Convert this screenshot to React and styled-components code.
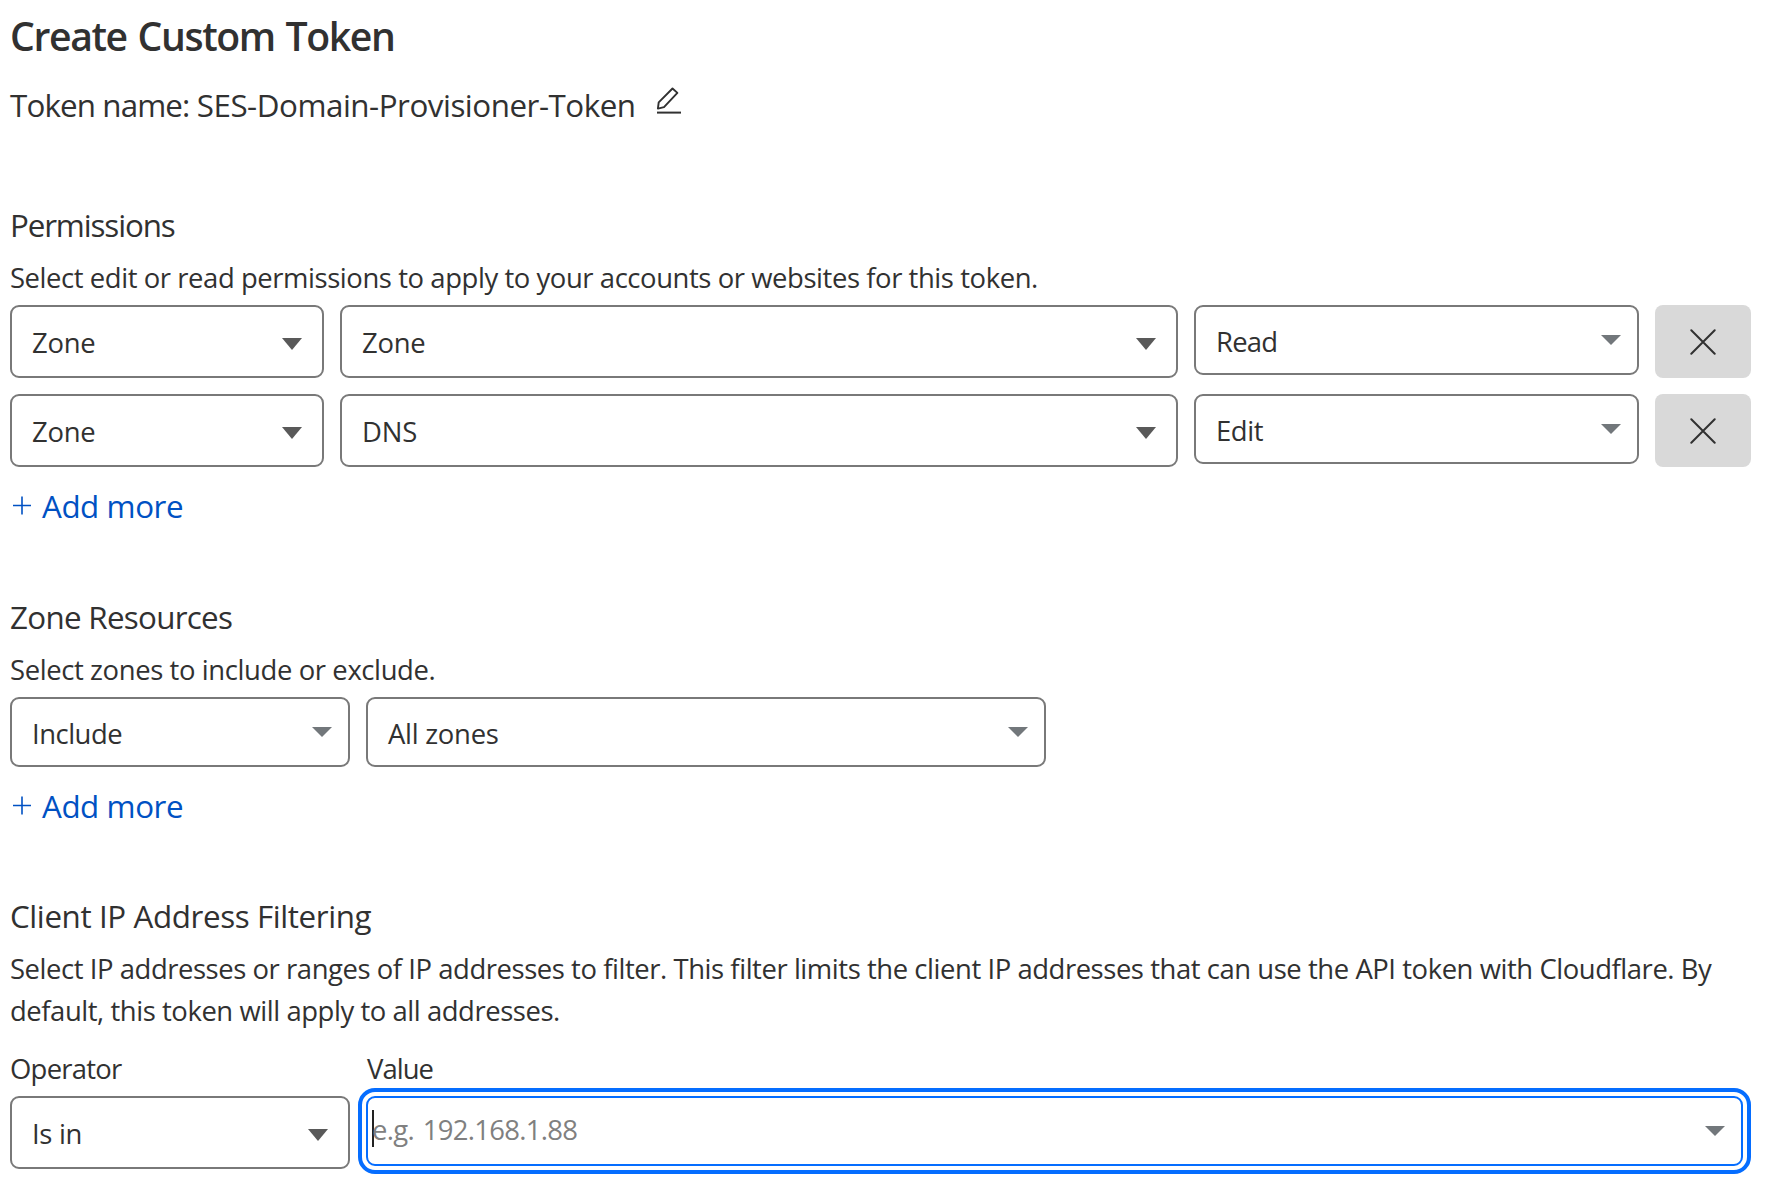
import React from "react";
import styled, { createGlobalStyle } from "styled-components";

const GlobalStyle = createGlobalStyle`
  *, *::before, *::after { box-sizing: border-box; }
  body {
    margin: 0;
    background: #fff;
    color: #313131;
    font-family: "Open Sans", "Noto Sans", "Liberation Sans", sans-serif;
    font-size: 27.44px;
    line-height: 42px;
  }
`;

const Page = styled.main`
  width: 1768px;
  height: 1192px;
  overflow: hidden;
  padding: 6px 17px 0 10px;
`;

const Title = styled.h1`
  margin: 0;
  font-size: 39.2px;
  line-height: 60px;
  font-weight: 600;
  letter-spacing: -1.4px;
  word-spacing: 2px;
`;

const TokenName = styled.div`
  display: flex;
  align-items: center;
  margin-top: 15px;
  height: 48px;
  font-size: 31.36px;
  letter-spacing: -0.48px;
  white-space: pre;
`;

const TokenLabel = styled.span`
  letter-spacing: -0.88px;
`;

const EditButton = styled.button`
  display: flex;
  padding: 0;
  margin: 0 0 8px 20px;
  border: 0;
  background: none;
  color: #313131;
`;

const Section = styled.section`
  margin-top: ${(p) => p.$top}px;
`;

const Heading = styled.h2`
  margin: 0 0 8px;
  font-size: 31.36px;
  line-height: 48px;
  font-weight: 400;
  letter-spacing: ${(p) => p.$track}px;
`;

const Description = styled.p`
  margin: 0 0 ${(p) => p.$bottom ?? 6}px;
  letter-spacing: ${(p) => p.$track ?? -0.426}px;
  white-space: nowrap;
`;

const Rows = styled.div`
  display: grid;
  gap: 16px;
`;

const Row = styled.div`
  display: grid;
  grid-template-columns: ${(p) => p.$columns};
  column-gap: 16px;
  align-items: start;
`;

const SelectBox = styled.div`
  display: flex;
  align-items: center;
  justify-content: space-between;
  height: ${(p) => (p.$native ? 73 : 70)}px;
  padding: 0 ${(p) => (p.$native ? 20 : 16)}px 0 20px;
  border: 2px solid #797979;
  border-radius: 9px;
  background: #fff;
`;

const SelectLabel = styled.span`
  padding-top: 3px;
  letter-spacing: ${(p) => p.$track}px;
`;

const Arrow = styled.svg`
  display: block;
  flex: none;
  width: 20px;
  height: ${(p) => (p.$native ? 12 : 10)}px;
  margin-top: ${(p) => (p.$native ? 5 : 0)}px;
  fill: ${(p) => (p.$native ? "#595959" : "#72777b")};
`;

const RemoveButton = styled.button`
  display: flex;
  align-items: center;
  justify-content: center;
  height: 73px;
  padding: 0;
  border: 0;
  border-radius: 8px;
  background: #d9d9d9;
  color: #313131;
`;

const AddButton = styled.button`
  display: flex;
  align-items: center;
  gap: 10px;
  margin-top: 15px;
  padding: 0 0 0 3px;
  border: 0;
  background: none;
  color: #0051c3;
  font: inherit;
  font-size: 31.36px;
  line-height: 48px;
  letter-spacing: -0.45px;
`;

const PlusIcon = styled.svg`
  display: block;
  margin-bottom: 2px;
`;

const FieldLabel = styled.label`
  display: block;
  margin-bottom: 6px;
  padding-left: ${(p) => p.$inset ?? 0}px;
  letter-spacing: ${(p) => p.$track}px;
`;

const ValueField = styled.div`
  display: flex;
  align-items: center;
  height: 70px;
  margin-right: 8px;
  padding: 0 16px 0 4px;
  border: 2px solid #056dff;
  border-radius: 9px;
  outline: 4px solid #056dff;
  outline-offset: 4px;
`;

const Caret = styled.span`
  width: 2px;
  height: 37px;
  margin: 0 -2px 5px 0;
  background: #222;
`;

const Placeholder = styled.span`
  flex: 1;
  padding-bottom: 3px;
  color: #808080;
  letter-spacing: -0.7px;
  word-spacing: 2.5px;
`;

function Triangle({ native }) {
  return native ? (
    <Arrow $native viewBox="0 0 20 12"><path d="M0 0h20L10 12z" /></Arrow>
  ) : (
    <Arrow viewBox="0 0 20 10"><path d="M0 0h20L10 10z" /></Arrow>
  );
}

function Select({ native = false, track = -0.4, children }) {
  return (
    <SelectBox $native={native}>
      <SelectLabel $track={track}>{children}</SelectLabel>
      <Triangle native={native} />
    </SelectBox>
  );
}

function AddMore() {
  return (
    <AddButton type="button">
      <PlusIcon width="19" height="19" viewBox="0 0 19 19" fill="none" stroke="currentColor" strokeWidth="1.6">
        <path d="M9 0.5v18M0 9.5h18" />
      </PlusIcon>
      Add more
    </AddButton>
  );
}

const permissions = [
  { scope: "Zone", item: "Zone", itemTrack: -0.25, access: "Read", accessTrack: -0.75 },
  { scope: "Zone", item: "DNS", itemTrack: -0.1, access: "Edit", accessTrack: -0.4 },
];

export default function App() {
  return (
    <>
      <GlobalStyle />
      <Page>
        <Title>Create Custom Token</Title>
        <TokenName>
          <TokenLabel>Token name: </TokenLabel>
          SES-Domain-Provisioner-Token
          <EditButton type="button" aria-label="Edit token name">
            <svg width="26" height="28" viewBox="0 0 26 28" fill="none" stroke="currentColor">
              <path d="M1.9 21.6l.8-6.2L16.5 1.5l4.9 4.4L8 20.1z" strokeWidth="1.9" strokeLinejoin="round" />
              <path d="M1 25.6h24" strokeWidth="2" />
            </svg>
          </EditButton>
        </TokenName>

        <Section $top={72}>
          <Heading $track={-1.14}>Permissions</Heading>
          <Description>Select edit or read permissions to apply to your accounts or websites for this token.</Description>
          <Rows>
            {permissions.map((p) => (
              <Row key={p.item} $columns="314px 838px 445px 96px">
                <Select native track={-0.25}>{p.scope}</Select>
                <Select native track={p.itemTrack}>{p.item}</Select>
                <Select track={p.accessTrack}>{p.access}</Select>
                <RemoveButton type="button" aria-label="Remove permission">
                  <svg width="26" height="26" viewBox="0 0 26 26" fill="none" stroke="currentColor" strokeWidth="2" strokeLinecap="round">
                    <path d="M1.3 1.3l23.4 23.4M24.7 1.3L1.3 24.7" />
                  </svg>
                </RemoveButton>
              </Row>
            ))}
          </Rows>
          <AddMore />
        </Section>

        <Section $top={63}>
          <Heading $track={-0.71}>Zone Resources</Heading>
          <Description $track={-0.389}>Select zones to include or exclude.</Description>
          <Row $columns="340px 680px">
            <Select track={-0.5}>Include</Select>
            <Select track={-0.27}>All zones</Select>
          </Row>
          <AddMore />
        </Section>

        <Section $top={62}>
          <Heading $track={-0.4}>Client IP Address Filtering</Heading>
          <Description $track={-0.44} $bottom={16}>
            Select IP addresses or ranges of IP addresses to filter. This filter limits the client IP addresses that can use the API token with Cloudflare. By
            <br />
            default, this token will apply to all addresses.
          </Description>
          <Row $columns="340px 1385px">
            <div>
              <FieldLabel $track={-0.75}>Operator</FieldLabel>
              <Select native track={-0.3}>Is in</Select>
            </div>
            <div>
              <FieldLabel $inset={1} $track={-0.96}>Value</FieldLabel>
              <ValueField>
                <Caret />
                <Placeholder>e.g. 192.168.1.88</Placeholder>
                <Triangle />
              </ValueField>
            </div>
          </Row>
        </Section>
      </Page>
    </>
  );
}
